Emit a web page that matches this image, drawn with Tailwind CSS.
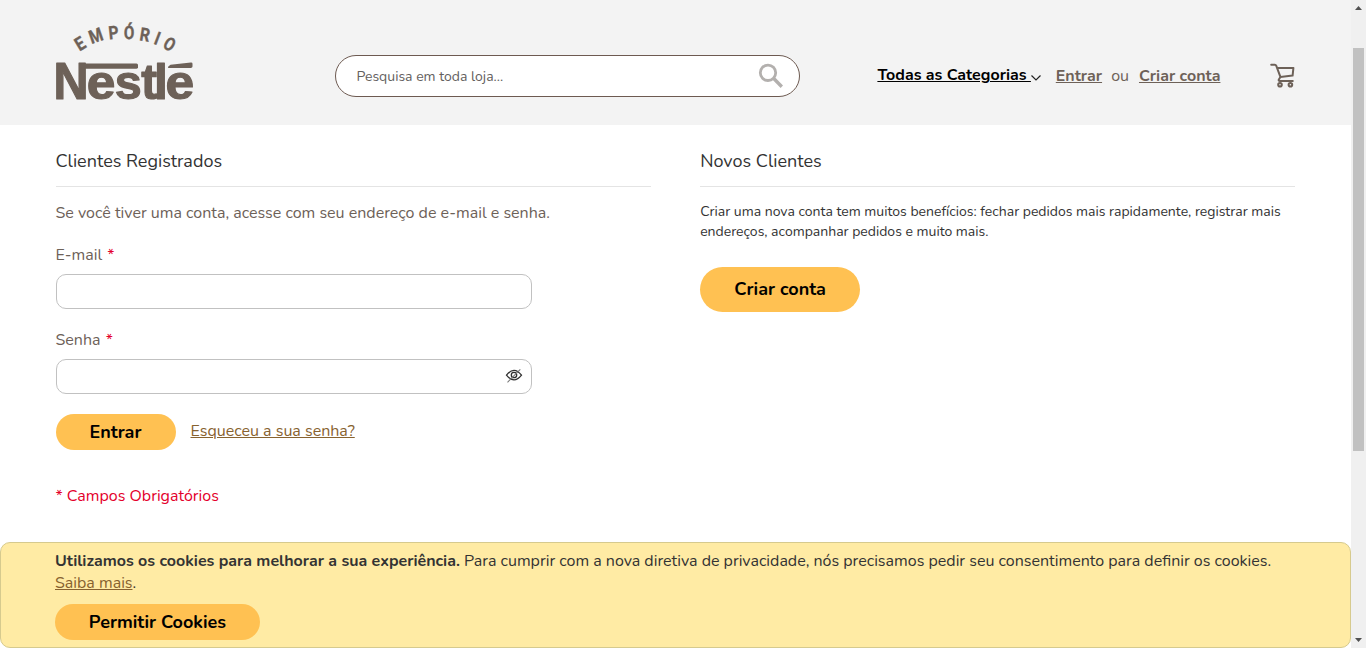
<!DOCTYPE html>
<html lang="pt-BR">
<head>
<meta charset="utf-8">
<title>Empório Nestlé</title>
<script src="https://cdn.jsdelivr.net/npm/@tailwindcss/browser@4"></script>
</head>
<body class="flex h-[648px] overflow-hidden bg-white font-['Nunito','Lato',sans-serif] text-base text-[#333]">
<div class="relative h-[648px] w-[1351px] shrink-0">
  <header class="flex h-[125px] items-start bg-[#f3f3f3] pl-[55px]">
    <a href="#" class="mt-5 block h-[84px] w-[142px]" aria-label="Empório Nestlé">
      <svg viewBox="55 20 142 84" class="h-[84px] w-[142px] overflow-visible" fill="#6d6158">
        <g font-family="Roboto" font-weight="700" font-size="18.5" text-anchor="middle" stroke="#6d6158" stroke-width=".35">
          <text transform="translate(83.4 49.2) rotate(-31) scale(.86 1)">E</text>
          <text transform="translate(98 41.7) rotate(-19) scale(.84 1)">M</text>
          <text transform="translate(114.2 39) rotate(-6) scale(.84 1)">P</text>
          <text transform="translate(129 39.2) rotate(1) scale(.82 1)">Ó</text>
          <text transform="translate(143.8 41.1) rotate(9) scale(.84 1)">R</text>
          <text transform="translate(155.2 44.4) rotate(21) scale(.85 1)">I</text>
          <text transform="translate(166.2 49.8) rotate(31) scale(.82 1)">O</text>
        </g>
        <g font-family="Liberation Sans" font-weight="700" font-size="50" stroke="#6d6158" stroke-width="1.2" stroke-linejoin="round">
          <text transform="translate(53.4 98.7) scale(.97 1.03)">N</text>
          <text transform="translate(86.7 98.7) scale(1.03 .97)">e</text>
          <text transform="translate(114.8 98.7) scale(.97 .97)">s</text>
          <text transform="translate(141.3 98.7) scale(.95 1)">t</text>
          <text transform="translate(154 98.7) scale(1 .98)">l</text>
          <text transform="translate(165.4 98.7) scale(1.03 .97)">e</text>
        </g>
        <path d="M79 63.4h57.5q1.5 0 1.5 1.5v2.4q0 1.4-1.5 1.4H82z"/>
        <path d="M170.5 64.8l20.3-2.3q1.7-.2 1.7 1.3v2.8q0 1.4-1.7 1.4h-22q-1.5 0-.5-1.5z"/>
      </svg>
    </a>
    <form class="mt-[55px] ml-[138px] flex h-[42px] w-[465px] items-center justify-between rounded-full border border-[#6d5a51] bg-white pr-[15px] pl-5">
      <span class="mt-px ml-[.4px] text-sm whitespace-nowrap text-[#63605d]">Pesquisa em toda loja...</span>
      <svg viewBox="0 0 26 26" class="size-[26px]" fill="none" stroke="#b3b0ae"><circle cx="10" cy="9.8" r="7.7" stroke-width="2.8"/><path d="M15.5 15.3l8.3 8.4" stroke-width="3.4"/></svg>
    </form>
    <nav class="mt-16 ml-[77.4px] flex h-6 items-center whitespace-nowrap text-[#6d6158]">
      <a href="#" class="flex w-[178.4px] text-black"><span class="-mt-0.5 w-[152.4px] leading-6 font-bold whitespace-pre underline">Todas as Categorias </span><svg viewBox="0 0 12 12" class="mt-[7px] size-3" fill="none" stroke="#222" stroke-width="1.2"><path d="M1.5 3.5L6 8l4.5-4.5"/></svg></a>
      <a href="#" class="w-[55.4px] font-bold underline">Entrar</a>
      <span class="w-[27.8px]">ou</span>
      <a href="#" class="w-[82px] font-bold underline">Criar conta</a>
    </nav>
    <a href="#" class="mt-[63px] ml-[49.5px]" aria-label="Carrinho">
      <svg viewBox="0 0 26 26" class="size-[26px]" fill="none" stroke="#6d6158" stroke-width="2" stroke-linecap="round" stroke-linejoin="round"><path d="M1.2 1.7h3.6q1 0 1.4 1l4.2 11.2 12.2-1.3.8-7.6H7.4M10.4 14l-1.7 2.7q-.3 1.3 1.1 1.3h13"/><circle cx="10" cy="21.8" r="1.8"/><circle cx="20.4" cy="21.8" r="1.8"/></svg>
    </a>
  </header>

  <main class="flex gap-[48.8px] px-[55.5px] whitespace-nowrap">
    <section class="w-[595.6px]">
      <h2 class="flex h-[62px] items-center border-b border-[#e4e4e4] pt-2.5 text-lg">Clientes Registrados</h2>
      <p class="mt-[14px] h-6 leading-6 text-[#6d6158]">Se você tiver uma conta, acesse com seu endereço de e-mail e senha.</p>
      <label class="mt-[18px] block h-6 leading-6 text-[#6d6158]">E-mail <span class="ml-px text-[#e4002b]">*</span></label>
      <div class="mt-[7px] h-[35px] w-[476px] rounded-[10px] border border-[#c1c1c1] bg-white"></div>
      <label class="mt-[19px] block h-6 leading-6 text-[#6d6158]">Senha <span class="ml-px text-[#e4002b]">*</span></label>
      <div class="mt-[7px] flex h-[35px] w-[476px] items-center justify-end rounded-[10px] border border-[#c1c1c1] bg-white pr-2">
        <svg viewBox="0 0 18 16" class="mb-[3px] h-4 w-[18px]" fill="none" stroke="#303030"><path d="M1.5 8.2Q9-1.6 16.5 8.2 9 17.6 1.5 8.2z" stroke-width="1.3"/><circle cx="9" cy="8" r="2.7" stroke-width="1.3"/><path d="M2.5 15.3L15.3 2.4" stroke="#777" stroke-width="1.1"/></svg>
      </div>
      <div class="mt-5 flex h-9">
        <button class="h-9 w-[120px] rounded-full bg-[#ffc152] text-lg leading-9 font-bold text-black">Entrar</button>
        <a href="#" class="ml-[15px] leading-[34px] text-[#87622f] underline">Esqueceu a sua senha?</a>
      </div>
      <p class="mt-[34px] leading-6 text-[#e4002b]">* Campos Obrigatórios</p>
    </section>
    <section class="ml-[.5px] w-[595.6px]">
      <h2 class="flex h-[62px] items-center border-b border-[#e4e4e4] pt-2.5 text-lg">Novos Clientes</h2>
      <p class="mt-[15px] text-sm leading-5">Criar uma nova conta tem muitos benefícios: fechar pedidos mais rapidamente, registrar mais<br>endereços, acompanhar pedidos e muito mais.</p>
      <button class="mt-[25px] h-[45px] w-40 rounded-full bg-[#ffc152] pb-0.5 text-lg font-bold text-black">Criar conta</button>
    </section>
  </main>

  <aside class="absolute bottom-0 left-0 h-[106px] w-[1351px] rounded-[10px] border border-[#d6ca8e] bg-[#ffeba4] pt-[7px] pl-[54px] whitespace-nowrap">
    <p class="leading-[22px]"><strong>Utilizamos os cookies para melhorar a sua experiência.</strong> Para cumprir com a nova diretiva de privacidade, nós precisamos pedir seu consentimento para definir os cookies.<br><a href="#" class="text-[#87622f] underline">Saiba mais</a>.</p>
    <button class="mt-[10px] block h-9 w-[205px] rounded-full bg-[#ffc152] text-lg font-bold text-black">Permitir Cookies</button>
  </aside>
</div>

<div class="flex h-[648px] w-[15px] flex-col items-center bg-[#f0f0f0]">
  <svg viewBox="0 0 15 48" class="h-12 w-[15px]"><path d="M4 10h7L7.5 6z" fill="#505050"/></svg>
  <div class="h-[403px] w-[11px] bg-[#c1c1c1]"></div>
  <svg viewBox="0 0 15 15" class="mt-auto h-[15px] w-[15px]"><path d="M4 5h7L7.5 9z" fill="#505050"/></svg>
</div>
</body>
</html>
